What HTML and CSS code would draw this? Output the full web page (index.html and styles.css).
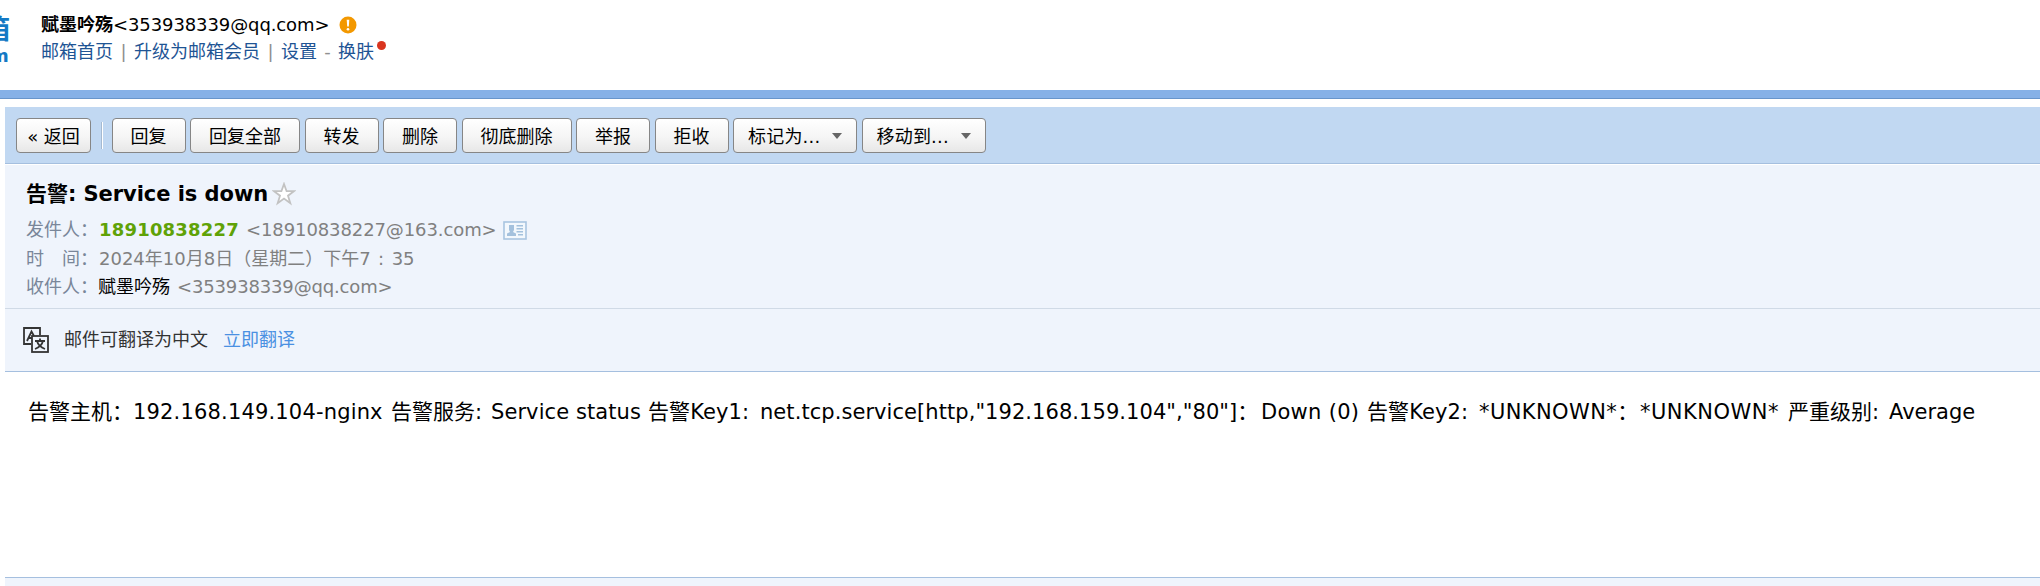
FILE: index.html
```html
<!DOCTYPE html>
<html lang="zh-CN">
<head>
<meta charset="utf-8">
<title>告警: Service is down</title>
<link rel="stylesheet" href="styles.css">
</head>
<body>
<header class="top">
  <div class="logo"><span class="logo-cn">箱</span><span class="logo-en">m</span></div>
  <div class="account">
    <div class="who"><b>赋墨吟殇</b><span class="mail">&lt;353938339@qq.com&gt;</span><svg class="warn" viewBox="0 0 18 18"><circle cx="9" cy="9" r="8.5" fill="#f39800"/><path d="M7.7 3.8h2.6l-.5 6.6H8.200z" fill="#fff"/><circle cx="9" cy="13.200" r="1.300" fill="#fff"/></svg></div>
    <nav class="links"><a>邮箱首页</a><i>|</i><a>升级为邮箱会员</a><i>|</i><a>设置</a><i>-</i><a>换肤</a><em class="dot"></em></nav>
  </div>
</header>
<div class="band"></div>
<main class="main">
  <div class="toolbar">
    <button class="btn back">« 返回</button><span class="sep"></span>
    <button class="btn w2">回复</button>
    <button class="btn w4">回复全部</button>
    <button class="btn w2">转发</button>
    <button class="btn w2">删除</button>
    <button class="btn w4">彻底删除</button>
    <button class="btn w2">举报</button>
    <button class="btn w2">拒收</button>
    <button class="btn drop"><span class="dots">标记为...</span><span class="arrow"></span></button>
    <button class="btn drop"><span class="dots">移动到...</span><span class="arrow"></span></button>
  </div>
  <section class="info">
    <h1 class="subject"><span class="title">告警: Service is down</span><svg class="star" viewBox="0 0 24 24"><path d="M12 2l2.600 7.200h7.400l-6 4.500 2.300 7.500-6.300-4.600-6.300 4.600L8 13.700 2 9.200h7.400z" fill="#fff" stroke="#c2c2c2" stroke-width="1.800"/></svg></h1>
    <div class="row"><span class="label">发件人：</span><b class="sender">18910838227</b><span class="addr from">&lt;18910838227@163.com&gt;</span><svg class="card" viewBox="0 0 24 19"><rect x="1" y="1" width="22" height="17" fill="#f3f8fd" stroke="#a9c5e0" stroke-width="1.600"/><path d="M6 4h5v5l-1 2 3 1.500V15H4v-2.500L7 11 6 9z" fill="#a4c1dd"/><path d="M13.500 4.700H20M13.500 7.700H20M13.500 10.700H20M15 13.700h5" stroke="#a4c1dd" stroke-width="1.500"/></svg></div>
    <div class="row"><span class="label">时　间：</span><span class="date">2024年10月8日（星期二）下午7<span class="colon">:</span>35</span></div>
    <div class="row"><span class="label">收件人：</span><span class="me">赋墨吟殇</span><span class="addr to">&lt;353938339@qq.com&gt;</span></div>
  </section>
  <section class="translate">
    <svg class="ticon" viewBox="0 0 26 26" fill="none" stroke="#343434" stroke-width="1.800"><path d="M8 17H1V1h16v7"/><path d="M4 14L8.500 4.500 11 9M6 11h3"/><rect x="9" y="9" width="16" height="16"/><path d="M12 14h10M17 11.500V14M20 14c-1 4-4 6.500-8 8M14 14c1 4 4 6.500 8 8"/></svg>
    <span class="ttext">邮件可翻译为中文</span><a class="tlink">立即翻译</a>
  </section>
  <article class="body"><span class="s1">告警主机：</span><span class="s2">192.168.149.104-nginx</span><span class="s3">告警服务:</span><span class="s4">Service status</span><span class="s5">告警Key1:</span><span class="s6">net.tcp.service[http,"192.168.159.104","80"]：</span><span class="s7">Down (0)</span><span class="s8">告警Key2:</span><span class="s9">*UNKNOWN*：</span><span class="s10">*UNKNOWN*</span><span class="s11">严重级别:</span><span class="s12">Average</span></article>
  <footer class="foot"></footer>
</main>
</body>
</html>
```

FILE: styles.css
```css
* { box-sizing: border-box; }
body { margin: 0; height: 586px; overflow: hidden; background: #fff; color: #000; font: 18px/28px "DejaVu Sans", "Noto Sans CJK SC", sans-serif; white-space: nowrap; }
.top { display: flex; height: 90px; padding-top: 11px; }
.logo { width: 41px; height: 54px; overflow: hidden; display: flex; flex-direction: column; color: #1479c4; font-weight: 700; }
.logo-cn { font-size: 27px; line-height: 38px; margin-left: -17px; }
.logo-en { font: 700 18px/14px "DejaVu Sans", sans-serif; margin-left: -10px; }
.who { display: flex; height: 27px; align-items: center; }
.mail { width: 226px; letter-spacing: -0.1px; }
.warn { width: 18px; height: 18px; }
.links { display: flex; height: 27px; align-items: center; color: #1e5494; padding-top: 1px; }
.links i { font-style: normal; color: #909090; width: 21px; text-align: center; }
.dot { width: 9px; height: 9px; border-radius: 50%; background: #d9351f; margin: -13px 0 0 3px; }
.band { height: 9px; background: #86b1e7; border-bottom: 1px solid #6895cb; }
.main { margin: 8px 0 0 5px; }
.toolbar { height: 57px; padding: 11px 11px 0; background: #c1d8f2; border-bottom: 1px solid #a5bfdf; display: flex; gap: 4.500px; }
.btn { height: 35px; padding: 2px 0 0; border: 1px solid #868686; border-radius: 4px; background: linear-gradient(#fff, #f5f5f5 55%, #e7e7e7); font: inherit; color: #000; display: flex; align-items: center; justify-content: center; flex: none; }
.back { width: 75px; }
.sep { width: 2px; height: 27px; margin: 4px 4.500px 0 5px; border-left: 1px solid #a5b9d0; background: #fff; }
.w2 { width: 74px; }
.w4 { width: 110px; }
.drop { width: 124px; gap: 11px; }
.dots { width: 73px; text-align: left; letter-spacing: 0.2px; }
.arrow { border: 5.500px solid transparent; border-top: 6px solid #666; border-bottom: 0; margin-top: -1px; }
.info { height: 144px; margin-top: 1px; background: #eff4fc; border-bottom: 1px solid #d0dae6; padding: 15px 0 0 21px; }
.subject { margin: 0 0 8px; display: flex; align-items: center; height: 28px; font-size: 21px; }
.title { width: 246px; letter-spacing: -0.05px; }
.star { width: 24px; height: 24px; }
.row { height: 28.500px; display: flex; align-items: center; color: #808080; }
.label { width: 73px; color: #798699; }
.sender { color: #5fa207; width: 147px; letter-spacing: 0.2px; }
.me { color: #000; width: 79px; margin-left: -1px; }
.addr { letter-spacing: -0.1px; }
.to { letter-spacing: -0.15px; }
.colon { display: inline-block; width: 21px; text-align: center; }
.card { width: 24px; height: 19px; margin-left: 6px; }
.translate { height: 63px; background: #eff4fc; border-bottom: 1px solid #a5bfdf; display: flex; align-items: center; padding-left: 18px; }
.ticon { width: 26px; height: 26px; }
.ttext { margin-left: 15px; width: 159px; color: #333; }
.tlink { color: #4a90e2; }
.body { height: 205px; padding: 25px 0 0 23px; font-size: 21px; line-height: 30px; display: flex; }
.foot { height: 10px; border-top: 1px solid #a5bfdf; background: #eff4fc; }
.s1 { width: 105px; }
.s2 { width: 258px; letter-spacing: 0.17px; }
.s3 { width: 100px; }
.s4 { width: 157px; letter-spacing: 0.08px; }
.s5 { width: 112px; letter-spacing: 0.1px; }
.s6 { width: 501px; letter-spacing: 0.06px; }
.s7 { width: 106px; letter-spacing: 0.3px; }
.s8 { width: 112px; letter-spacing: 0.1px; }
.s9 { width: 161px; letter-spacing: 0.4px; }
.s10 { width: 148px; letter-spacing: 0.5px; }
.s11 { width: 101px; }
```
